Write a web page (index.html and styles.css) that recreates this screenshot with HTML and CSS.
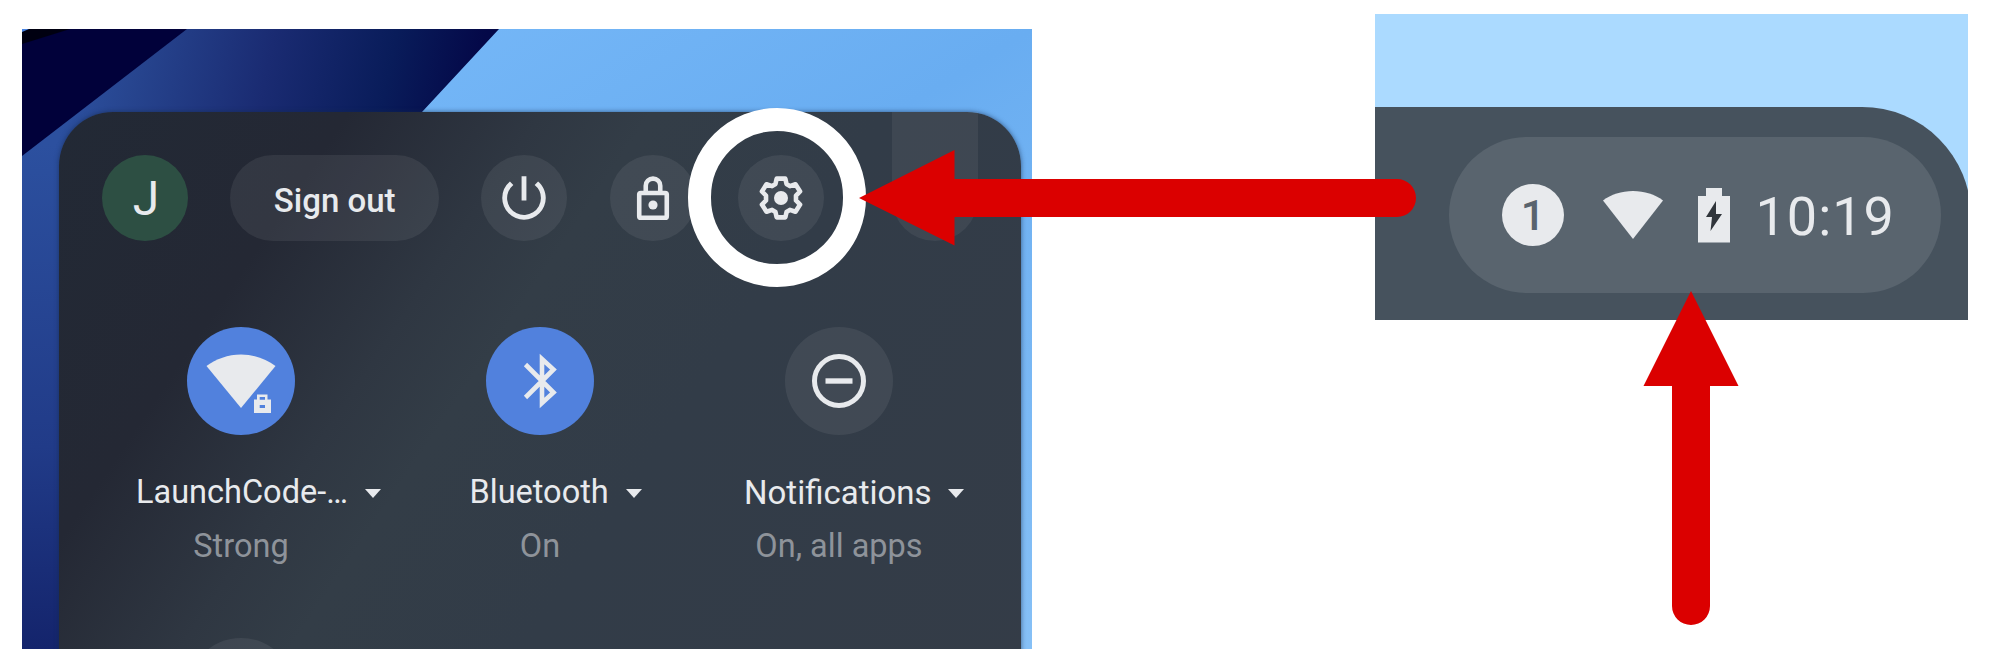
FILE: index.html
```html
<!DOCTYPE html>
<html lang="en">
<head>
<meta charset="utf-8">
<title>Open settings</title>
<link rel="stylesheet" href="styles.css">
</head>
<body>
<main class="guide">
  <section class="desktop">
    <svg class="wallpaper" viewBox="0 0 1010 620" preserveAspectRatio="none" aria-hidden="true">
      <defs>
        <linearGradient id="band" gradientUnits="userSpaceOnUse" x1="40" y1="90" x2="430" y2="170">
          <stop offset="0" stop-color="#2c509f"/><stop offset=".15" stop-color="#27458f"/><stop offset=".48" stop-color="#1a2b72"/><stop offset=".78" stop-color="#091c5a"/><stop offset="1" stop-color="#040848"/>
        </linearGradient>
        <linearGradient id="side" x1="0" y1="0" x2="0" y2="1">
          <stop offset="0" stop-color="#2c509f"/><stop offset=".6" stop-color="#213b88"/><stop offset="1" stop-color="#14246c"/>
        </linearGradient>
        <linearGradient id="sky" x1="0" y1="0" x2="1" y2="1">
          <stop offset="0" stop-color="#7cbdfb"/><stop offset=".5" stop-color="#69adf1"/><stop offset="1" stop-color="#86c0f6"/>
        </linearGradient>
      </defs>
      <rect width="1010" height="620" fill="url(#sky)"/>
      <path d="M0 0H477L400 83V200H0Z" fill="url(#band)"/>
      <rect y="115" width="60" height="505" fill="url(#side)"/>
      <path d="M0 0H165L0 127Z" fill="#01013a"/>
      <path d="M0 0H48L0 15Z" fill="#000010"/>
      <path d="M0 0H7L0 3Z" fill="#4b85e2"/>
    </svg>
    <div class="panel">
      <header class="toolbar">
        <div class="round avatar">J</div>
        <div class="signout">Sign out</div>
        <div class="round"><svg class="icon" viewBox="0 0 24 24"><path fill="#e8eaed" d="M13 3h-2v10h2V3zm4.83 2.17-1.42 1.42A6.92 6.92 0 0 1 19 12a7 7 0 1 1-11.42-5.42L6.17 5.17A8.93 8.93 0 0 0 3 12a9 9 0 0 0 18 0c0-2.74-1.23-5.18-3.17-6.83z"/></svg></div>
        <div class="round"><svg class="icon" viewBox="0 0 24 24"><path fill="none" stroke="#e8eaed" stroke-width="1.900" d="M9 9.500V6.900a3 2.900 0 0 1 6 0v2.600M7 9.900h10q.7 0 .7.700v8.900q0 .7-.7.700H7q-.7 0-.7-.7v-8.900q0-.7.700-.7z"/><circle cx="12" cy="14.900" r="1.900" fill="#e8eaed"/></svg></div>
        <div class="round"><svg class="icon" viewBox="0 0 24 24"><path fill="none" stroke="#e8eaed" stroke-width="1.900" stroke-linejoin="round" d="M10.200 4h3.600l.5 2.200 1.400.9 2.300-.8 1.900 3-1.700 1.700v2l1.700 1.700-1.900 3-2.300-.8-1.400.9-.5 2.200h-3.600l-.5-2.200-1.400-.9-2.300.8-1.900-3L5.800 13v-2L4.100 9.300l1.900-3 2.300.8 1.400-.9z"/><circle cx="12" cy="12" r="2.900" fill="#e8eaed"/></svg></div>
        <div class="collapse"></div>
      </header>
      <div class="tiles">
        <div class="tile">
          <div class="disc on"><svg viewBox="0 0 108 108"><path fill="#e8eaed" d="M54 27.500c13 0 25 4.500 34.500 11.500L54 81 19.500 39C29 32 41 27.500 54 27.500z"/><path fill="#e8eaed" d="M70 67.500h10.500v5H84V86H67V72.500h3z"/><path fill="#5181dd" d="M72.700 70h5.300v2.700h-5.300zM72.700 78h5.300v3h-5.300z"/></svg></div>
          <div class="name wifi"><span>LaunchCode-…</span><i class="caret"></i></div>
          <div class="state strong">Strong</div>
        </div>
        <div class="tile">
          <div class="disc on"><svg viewBox="0 0 108 108"><path fill="none" stroke="#e8eaed" stroke-width="4.600" d="M39.500 37.500 67.500 65.500 56 76V32L67.500 42.500 39.500 70.500"/></svg></div>
          <div class="name blue"><span>Bluetooth</span><i class="caret"></i></div>
          <div class="state">On</div>
        </div>
        <div class="tile">
          <div class="disc"><svg viewBox="0 0 108 108"><circle cx="54" cy="54" r="24.500" fill="none" stroke="#e8eaed" stroke-width="5"/><path fill="#e8eaed" d="M40.500 51.300h27v5.400h-27z"/></svg></div>
          <div class="name notify"><span>Notifications</span><i class="caret"></i></div>
          <div class="state apps">On, all apps</div>
        </div>
        <div class="tile"><div class="disc"></div></div>
      </div>
    </div>
  </section>

  <section class="corner">
    <div class="shelf">
      <div class="status">
        <div class="badge">1</div>
        <svg class="wifi-small" viewBox="0 0 60 48"><path fill="#e8eaed" d="M30 0c11.500 0 22 3.500 30 9.500L30 48 0 9.500C8 3.500 18.500 0 30 0z"/></svg>
        <svg class="battery" viewBox="0 0 32 55"><path fill="#e8eaed" d="M8 0h16v8h8v46.500H0V8h8z"/><path fill="#30353b" d="M18 13 8 29h6l-1.500 14L24 26h-6z"/></svg>
        <time class="clock">10:19</time>
      </div>
    </div>
  </section>

  <div class="ring"></div>
  <svg class="arrow-left" viewBox="0 0 557 96"><path d="M0 48 95.500 0V29H538a19 19 0 0 1 0 38H95.500V95.500Z"/></svg>
  <svg class="arrow-up" viewBox="0 0 96 334"><path d="M48 0 95.500 95H67V315a19 19 0 0 1-38 0V95H.5Z"/></svg>
</main>
</body>
</html>
```

FILE: styles.css
```css
* { box-sizing: border-box; }
body { margin: 0; background: #fff; font-family: Roboto, "Liberation Sans", sans-serif; }
.guide {
  position: relative;
  width: 1999px;
  height: 667px;
  overflow: hidden;
  display: flex;
  align-items: flex-start;
  gap: 343px;
  padding: 14px 0 0 22px;
}
.desktop {
  position: relative;
  width: 1010px;
  height: 620px;
  margin-top: 15px;
  padding: 83px 11px 0 37px;
  overflow: hidden;
}
.wallpaper { position: absolute; inset: 0; width: 100%; height: 100%; }
.panel {
  position: relative;
  height: 620px;
  border-radius: 54px 54px 0 0;
  background: linear-gradient(124deg, #222935 0%, #242834 21%, #2f3742 35%, #333d47 43%, #323c48 60%, #343c47 100%);
  box-shadow: 0 0 5px rgba(20, 40, 75, .65);
  padding: 0 43px;
}
.toolbar { display: flex; gap: 42.200px; padding-top: 43px; height: 129px; }
.round, .signout {
  height: 86px;
  border-radius: 43px;
  display: flex;
  align-items: center;
  justify-content: center;
  background: rgba(255, 255, 255, .07);
  color: #e8eaed;
}
.round { width: 86px; flex: none; }
.avatar { background: #2d4f43; font-size: 48px; padding-left: 2px; }
.signout { width: 209px; flex: none; font-size: 33px; font-weight: 500; padding-top: 4px; }
.icon { width: 58px; height: 58px; }
.collapse {
  width: 86px;
  height: 129px;
  margin: -43px 0 0 auto;
  flex: none;
  border-radius: 0 0 43px 43px;
  background: rgba(255, 255, 255, .06);
}
.tiles { display: grid; grid-template-columns: repeat(3, 299px); margin: 86px 0 0 -10.500px; row-gap: 62px; }
.tile { display: flex; flex-direction: column; align-items: center; height: 249px; }
.disc { width: 108px; height: 108px; border-radius: 50%; background: rgba(255, 255, 255, .07); flex: none; }
.disc svg { display: block; width: 108px; height: 108px; }
.disc.on { background: #5181dd; }
.name {
  display: flex;
  align-items: center;
  justify-content: space-between;
  height: 40px;
  margin-top: 37px;
  color: #e8eaed;
  font-size: 32.500px;
  white-space: nowrap;
  align-self: flex-start;
}
.wifi { margin-left: 44.500px; width: 245px; }
.blue { margin-left: 79px; width: 172px; }
.notify { margin-left: 54.500px; width: 220px; font-size: 33px; }
.caret { border: 8px solid transparent; border-top: 9px solid #e8eaed; border-bottom: 0; margin-top: 2px; }
.state { height: 40px; line-height: 40px; margin-top: 14px; color: #8e939a; font-size: 32.500px; }
.corner { width: 593px; height: 306px; padding-top: 93px; background: #abdaff; overflow: hidden; }
.shelf {
  height: 213px;
  padding: 30px 27.500px 0 73.500px;
  background: #46525d;
  border-top-right-radius: 109px;
  margin-right: -3px;
  padding-right: 30.500px;
}
.status {
  display: flex;
  align-items: center;
  height: 156px;
  border-radius: 78px;
  background: #59646e;
  padding-left: 53.500px;
  color: #e8eaed;
}
.badge {
  width: 62px;
  height: 62px;
  border-radius: 50%;
  background: #e8eaed;
  color: #59646e;
  font-size: 43px;
  font-weight: 500;
  line-height: 63px;
  text-align: center;
}
.wifi-small { width: 60px; height: 48px; margin-left: 39px; }
.battery { width: 32px; height: 55px; margin-left: 35px; }
.clock { font-size: 54px; line-height: 60px; margin: 3px 0 0 25.500px; letter-spacing: 1px; }
.ring {
  position: absolute;
  left: 687.500px;
  top: 108px;
  width: 178.500px;
  height: 178.500px;
  border: 23px solid #fff;
  border-radius: 50%;
}
.arrow-left, .arrow-up { position: absolute; fill: #db0000; }
.arrow-left { left: 859px; top: 150px; width: 557px; height: 96px; }
.arrow-up { left: 1643px; top: 291px; width: 96px; height: 334px; }
```
